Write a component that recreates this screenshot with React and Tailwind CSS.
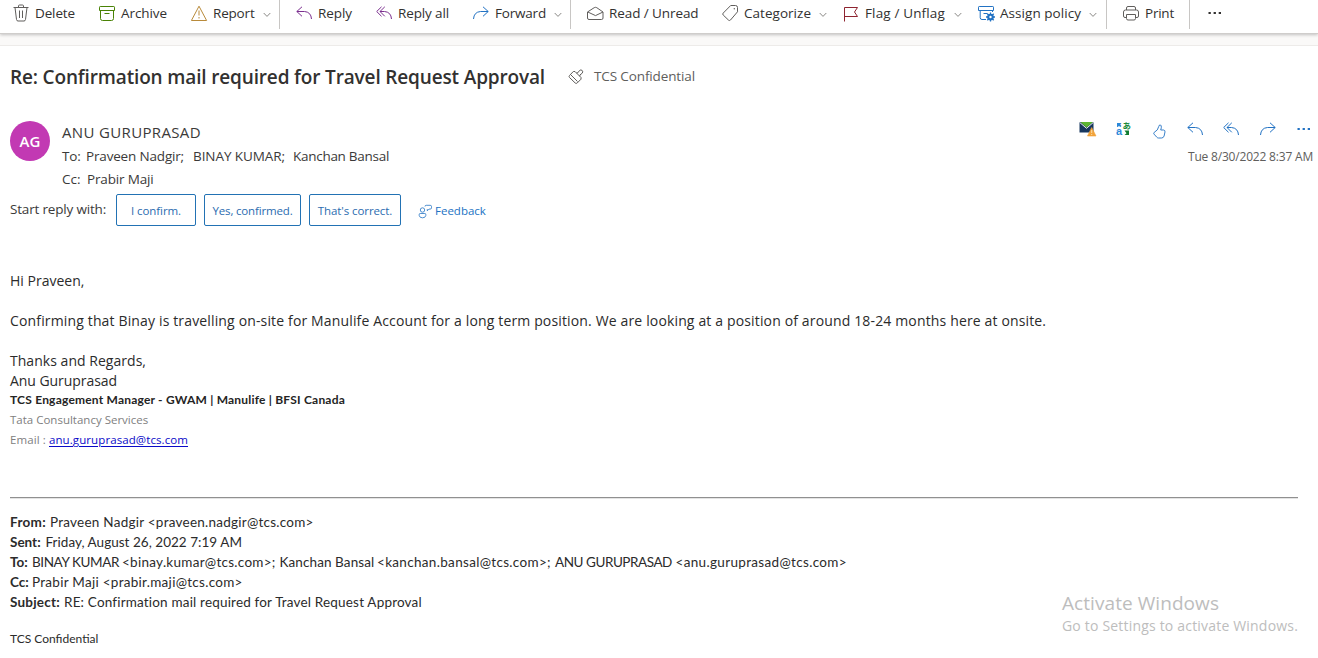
import React from "react";

function Svg({ w = 18, h = 18, className = "", children }) {
  return (
    <svg width={w} height={h} viewBox={`0 0 ${w} ${h}`} fill="none" stroke="currentColor" strokeWidth="1" className={`shrink-0 ${className}`}>
      {children}
    </svg>
  );
}

const Trash = () => (
  <Svg className="text-[#605e5c]">
    <path d="M.5 3.5h15M5.5 3.5V2q0-1 1-1h3q1 0 1 1v1.500M2 3.500l1.500 12q.2 1.500 1.500 1.500h6q1.300 0 1.500-1.500l1.500-12M6.500 6.500v7.500M9.500 6.500v7.500" />
  </Svg>
);
const Archive = () => (
  <Svg className="text-[#498205]">
    <path d="M.5 3.200q0-.7.700-.7h13.600q.7 0 .7.700v3.300H.5zM1.500 6.500v8q0 2 2 2h9q2 0 2-2v-8M5.500 9.500h5" />
  </Svg>
);
const Warn = () => (
  <Svg className="text-[#b88a3a]">
    <path d="M8 2.200 15.600 16.500H.4zM8 6.500v5M8 13v1.500" strokeLinejoin="round" />
  </Svg>
);
const Reply = ({ className }) => (
  <Svg w={16} h={14} className={className}>
    <path d="M6 .8.800 5.500 6 10.300M.800 5.500H8.500q6.500.5 7 7.500" />
  </Svg>
);
const ReplyAll = ({ className }) => (
  <Svg w={16} h={14} className={className}>
    <path d="M5.500.8.700 5.500l4.800 4.800M8.800.8 4 5.500l4.800 4.800M4 5.500h4.500q6.500.5 7 7.500" />
  </Svg>
);
const Forward = ({ className }) => (
  <Svg w={16} h={14} className={className}>
    <path d="M10 .8 15.200 5.500 10 10.300M15.200 5.500H7.500q-6.500.5-7 7.500" />
  </Svg>
);
const OpenMail = () => (
  <Svg className="text-[#605e5c]">
    <path d="M.5 8 7.200 3.700q1.300-.8 2.600 0L16 8v6q0 1.500-1.500 1.500H2Q.5 15.500.5 14zM.8 8l7.700 3.600L16 8" />
  </Svg>
);
const Tag = () => (
  <Svg className="text-[#605e5c]">
    <path d="M8.700 1.500h4.800q2 0 2 2v4.300L8.500 16q-1 1-2 .1L1.200 11q-1-.9 0-1.900z" />
    <circle cx="12.300" cy="4.700" r=".7" fill="currentColor" stroke="none" />
  </Svg>
);
const Flag = () => (
  <Svg className="text-[#8e2430]">
    <path d="M1.500 17.500v-14h13l-3 4.500 3 4.500h-13" />
  </Svg>
);
const Policy = () => (
  <Svg className="text-[#2272c3]">
    <path d="M8 15.500H4q-1.800 0-1.800-1.800V6.500M.5 3.200q0-.7.700-.7h13.600q.7 0 .7.700v3.300H.5zM5.500 9.500h4M14.500 6.500v1.500" />
    <circle cx="12.500" cy="13" r="2.300" strokeWidth="2.100" />
    <path d="M12.500 8.500v9M8 13h9M9.300 9.800l6.400 6.400M15.700 9.800l-6.400 6.400" strokeWidth="1.300" />
    <circle cx="12.500" cy="13" r="1.200" fill="white" stroke="none" />
  </Svg>
);
const Print = () => (
  <Svg className="text-[#605e5c]">
    <path d="M3.500 6V4q0-1.500 1.500-1.500h6q1.500 0 1.500 1.500v2M3.500 13.500H2q-1.500 0-1.500-1.500V8q0-2 2-2h11q2 0 2 2v4q0 1.500-1.500 1.500h-1.500M3.500 10.500h9v4q0 1.500-1.500 1.500H5q-1.500 0-1.500-1.500z" />
  </Svg>
);
const Chevron = () => (
  <Svg w={8} h={6} className="text-[#8a8886]">
    <path d="M.7 1 4 4.400 7.300 1" />
  </Svg>
);
const Dots = ({ className }) => (
  <Svg w={14} h={4} className={className}>
    <path d="M.5 2h2.300M5.600 2h2.300M10.700 2H13" strokeWidth="2" />
  </Svg>
);

function Tool({ className, icon, label, chevron }) {
  return (
    <button className={`flex shrink-0 items-center text-left text-[13.5px] ${className}`}>
      <span className="flex w-[22px] shrink-0">{icon}</span>
      <span className="grow whitespace-nowrap">{label}</span>
      {chevron && <span className="mt-1 mr-2"><Chevron /></span>}
    </button>
  );
}
const Divider = () => <span className="h-[29px] w-px shrink-0 self-start bg-[#c8c6c4]" />;

function Toolbar() {
  return (
    <header className="relative h-[34px] border-b border-[#cfcdcb] bg-white shadow-[0_1px_3px_rgba(0,0,0,0.22)]">
      <div className="flex h-[26px] items-center pl-[13px] text-[#323130]">
        <Tool className="w-[86px] tracking-[-0.126px]" icon={<Trash />} label="Delete" />
        <Tool className="w-[92px] tracking-[-0.076px]" icon={<Archive />} label="Archive" />
        <Tool className="w-[88px] tracking-[-0.187px]" icon={<Warn />} label="Report" chevron />
        <Divider />
        <Tool className="ml-4 w-[80px] tracking-[-0.069px]" icon={<Reply className="text-[#7b2f8f]" />} label="Reply" />
        <Tool className="w-[97px] tracking-[-0.13px]" icon={<ReplyAll className="text-[#7b2f8f]" />} label="Reply all" />
        <Tool className="w-[97px] tracking-[-0.192px]" icon={<Forward className="text-[#2272c3]" />} label="Forward" chevron />
        <Divider />
        <Tool className="ml-4 w-[135px] tracking-[-0.086px]" icon={<OpenMail />} label="Read / Unread" />
        <Tool className="w-[121px] pr-[8px] tracking-[0.032px]" icon={<Tag />} label="Categorize" chevron />
        <Tool className="w-[135px] pr-[8px] tracking-[0.148px]" icon={<Flag />} label="Flag / Unflag" chevron />
        <Tool className="w-[128px] pr-px tracking-[0.05px]" icon={<Policy />} label="Assign policy" chevron />
        <Divider />
        <Tool className="ml-4 w-[66px] tracking-[-0.228px]" icon={<Print />} label="Print" />
        <Divider />
        <Dots className="ml-[18px] text-[#323130]" />
      </div>
    </header>
  );
}

const Stamp = () => (
  <Svg w={16} h={16} className="text-[#605e5c]">
    <path d="M7 2.500 13 8.500v1.700L9.200 14q-1 .9-2 0L1.500 8.500q-.9-1 0-2L5.300 2.500zM3 6l6.500 6.500M8.500 4l1.400-.3 1.600-2.200q1.400-1.200 2.700 0 1.100 1.300 0 2.700L12 5.900l-.3 1.300" />
  </Svg>
);
const FeedbackIcon = () => (
  <Svg w={15} h={15} className="text-[#2272c3]">
    <circle cx="4.500" cy="6" r="2.200" strokeWidth=".8" />
    <path d="M1.200 10.500q0-1 1-1h4.600q1 0 1 1v1q-.3 2.300-3.300 2.300t-3.300-2.300zM7 2.500q0-1.200 1.200-1.200h4q1.300 0 1.300 1.200v1.300q0 1.300-1.300 1.300H11L9.300 6.800V5.100" strokeWidth=".8" />
  </Svg>
);
const MailWarn = () => (
  <Svg w={18} h={16}>
    <path d="M.5 1h14v10.500H.5z" fill="#17375e" stroke="none" />
    <path d="M1.500 1h12.500L7.500 6.500z" fill="#5cb531" stroke="none" />
    <path d="M.5 1.300 7.500 7.300l7-6" stroke="#fff" strokeWidth=".9" />
    <path d="M12.700 6.500 17 15H8.500z" fill="#f2a33a" stroke="#f2a33a" strokeLinejoin="round" strokeWidth=".6" />
    <path d="M12.700 9v3M12.700 13v1" stroke="#fbdca8" />
  </Svg>
);
const Translate = () => (
  <svg width="16" height="16" viewBox="0 0 16 16" className="shrink-0 font-['Liberation_Sans','Noto_Sans_CJK_JP',sans-serif]">
    <text x="0" y="14" fontSize="11" fontWeight="700" fill="#2b88d8">a</text>
    <text x="6.500" y="8" fontSize="8.500" fontWeight="700" fill="#218a3a">あ</text>
    <path d="M1 2h4.500L4.300 3.500 5.500 5 4.300 6 3 5 1.500 6H1z" fill="#2b88d8" />
    <path d="M8.500 9.500H13V14H8.500l2-1.700z" fill="#107c30" />
  </svg>
);
const Like = () => (
  <Svg w={13} h={15} className="text-[#2272c3]">
    <path d="M6.500 1q1.300-.4 1.700.9.500 1.600-.5 4.100h2.800q1.700.2 1.500 1.900l-.9 4.100q-.6 2-2.600 2H5.500q-1 0-1.700-.8L1 10.100q-.8-1 .2-1.700Q5 6.500 5.800 2.400z" strokeWidth=".9" />
  </Svg>
);

function Header() {
  return (
    <section className="flex items-start pl-[10px]">
      <div className="mt-[14px] flex h-10 w-10 shrink-0 items-center justify-center rounded-full bg-[#c239b3] text-[15px] font-semibold text-white">AG</div>
      <div className="ml-3 grow text-[13.5px] whitespace-pre text-[#3b3a39]">
        <div className="mt-[13px] h-6 text-[15px] leading-6 tracking-[0.35px]">ANU GURUPRASAD</div>
        <div className="flex h-6 leading-6">
          <span className="w-[24px] tracking-[-0.1px]">To:</span>
          <span className="w-[107px] tracking-[-0.171px]">Praveen Nadgir;</span>
          <span className="w-[100px] tracking-[-0.076px]">BINAY KUMAR;</span>
          <span className="tracking-[-0.28px]">Kanchan Bansal</span>
        </div>
        <div className="flex h-[22px] leading-[22px]">
          <span className="w-[25px]">Cc:</span>
          <span className="tracking-[-0.163px]">Prabir Maji</span>
        </div>
      </div>
      <div className="flex w-[240px] shrink-0 flex-col">
        <div className="mt-[13px] flex h-[18px] items-center pl-px text-[#2272c3]">
          <span className="flex w-[37px]"><MailWarn /></span>
          <span className="flex w-[37px]"><Translate /></span>
          <span className="mt-1 flex w-[34px]"><Like /></span>
          <span className="flex w-[36px]"><Reply /></span>
          <span className="flex w-[37px]"><ReplyAll /></span>
          <span className="flex w-[37px]"><Forward /></span>
          <Dots />
        </div>
        <div className="mt-[7px] mr-[5px] h-6 text-right text-[12px] leading-6 tracking-[-0.191px] whitespace-nowrap text-[#605e5c]">Tue 8/30/2022 8:37 AM</div>
      </div>
    </section>
  );
}

function Choice({ className, children }) {
  return (
    <button className={`flex h-8 items-center justify-center rounded-[2px] border border-[#2272b4] pt-[2px] text-[11.5px] whitespace-nowrap text-[#2b6cb0] ${className}`}>{children}</button>
  );
}

function QuickReplies() {
  return (
    <section className="mt-[4px] flex h-8 items-center pl-[10px]">
      <span className="w-[106px] pb-[2px] text-[13.5px] leading-[30px] tracking-[-0.182px] whitespace-nowrap text-[#3b3a39]">Start reply with:</span>
      <Choice className="w-[80px] tracking-[-0.082px]">I confirm.</Choice>
      <Choice className="ml-2 w-[97px] tracking-[-0.163px]">Yes, confirmed.</Choice>
      <Choice className="ml-2 w-[92px] tracking-[-0.085px]">That's correct.</Choice>
      <button className="ml-[17px] flex items-center pt-[2px] text-[11.5px] text-[#2272c3]">
        <FeedbackIcon />
        <span className="ml-[2px]">Feedback</span>
      </button>
    </section>
  );
}

function Message() {
  return (
    <article className="mt-[45px] pl-[10px] text-[14px] leading-5 whitespace-nowrap text-[#2b2b2b]">
      <p>Hi Praveen,</p>
      <p className="mt-5 tracking-[0.148px]">Confirming that Binay is travelling on-site for Manulife Account for a long term position. We are looking at a position of around 18-24 months here at onsite.</p>
      <p className="mt-5 tracking-[0.034px]">Thanks and Regards,</p>
      <p className="tracking-[-0.058px]">Anu Guruprasad</p>
      <div className="-mt-px text-[11.5px] text-[#808080]">
        <p className="font-[Lato,sans-serif] text-[12px] leading-[19px] font-bold tracking-[0.205px] text-[#242424]">TCS Engagement Manager - GWAM | Manulife | BFSI Canada</p>
        <p className="mt-px">Tata Consultancy Services</p>
        <p className="flex">
          <span className="w-[39px] tracking-[0.1px]">Email :</span>
          <a className="tracking-[0.087px] text-[#0a0ac8] underline underline-offset-2">anu.guruprasad@tcs.com</a>
        </p>
      </div>
    </article>
  );
}

function Quoted() {
  return (
    <section className="mt-[47px] ml-[10px] font-[Lato,sans-serif] text-[13.5px] leading-5 whitespace-nowrap text-[#2b2b2b]">
      <hr className="mb-[13px] h-[2px] w-[1288px] border-t border-b border-t-[#909090] border-b-[#e4e4e4]" />
      <p className="flex"><b className="w-[40px] tracking-[0.3px]">From:</b><span className="tracking-[0.245px]">Praveen Nadgir &lt;praveen.nadgir@tcs.com&gt;</span></p>
      <p className="flex"><b className="w-[35.500px]">Sent:</b><span className="tracking-[0.03px]">Friday, August 26, 2022 7:19 AM</span></p>
      <p className="flex">
        <b className="w-[22px]">To:</b>
        <span className="w-[90px] tracking-[-0.4px]">BINAY KUMAR</span>
        <span className="w-[157.500px] tracking-[0.28px]">&lt;binay.kumar@tcs.com&gt;;</span>
        <span className="w-[97.500px] tracking-[0.1px]">Kanchan Bansal</span>
        <span className="w-[178px] tracking-[0.32px]">&lt;kanchan.bansal@tcs.com&gt;;</span>
        <span className="w-[120.500px] tracking-[-0.45px]">ANU GURUPRASAD</span>
        <span className="tracking-[0.33px]">&lt;anu.guruprasad@tcs.com&gt;</span>
      </p>
      <p className="flex"><b className="w-[22px]">Cc:</b><span className="tracking-[0.28px]">Prabir Maji &lt;prabir.maji@tcs.com&gt;</span></p>
      <p className="flex"><b className="w-[54px] tracking-[0.2px]">Subject:</b><span className="tracking-[0.182px]">RE: Confirmation mail required for Travel Request Approval</span></p>
      <p className="mt-[17px] text-[12px]">TCS Confidential</p>
    </section>
  );
}

export default function App() {
  return (
    <div className="relative h-[658px] w-[1318px] overflow-hidden bg-white font-['Open_Sans',sans-serif]">
      <Toolbar />
      <div className="h-3 border-b border-[#edebe9] bg-[#faf9f8]" />
      <div className="flex h-[61px] items-center pl-[10px] whitespace-nowrap">
        <h1 className="w-[558px] pt-[2px] text-[19px] font-semibold tracking-[-0.152px] text-[#323130]">Re: Confirmation mail required for Travel Request Approval</h1>
        <Stamp />
        <span className="ml-[10px] text-[13.5px] tracking-[-0.122px] text-[#605e5c]">TCS Confidential</span>
      </div>
      <Header />
      <QuickReplies />
      <Message />
      <Quoted />
      <div className="absolute top-[591px] left-[1062px] whitespace-nowrap text-[#bdbdbd]">
        <div className="h-6 text-[19px] leading-6 tracking-[0.067px]">Activate Windows</div>
        <div className="h-[22px] text-[14px] leading-[22px] tracking-[0.189px]">Go to Settings to activate Windows.</div>
      </div>
    </div>
  );
}
